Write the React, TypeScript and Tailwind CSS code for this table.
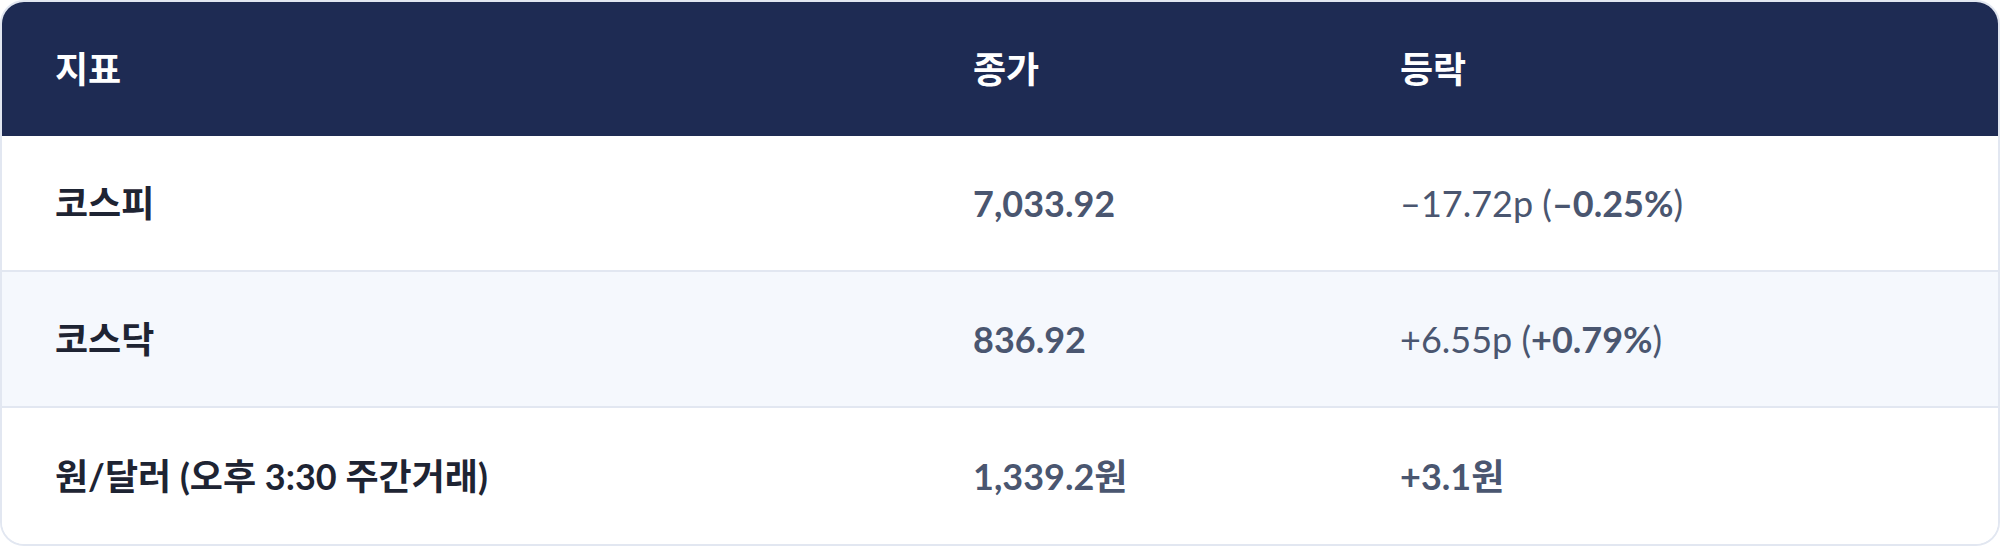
const rows = [
  {
    name: '코스피',
    close: '7,033.92',
    change: (
      <>
        –17.72p (<b className="font-bold">–0.25%</b>)
      </>
    ),
  },
  {
    name: '코스닥',
    close: '836.92',
    change: (
      <>
        +6.55p (<b className="font-bold">+0.79%</b>)
      </>
    ),
    striped: true,
  },
  {
    name: '원/달러 (오후 3:30 주간거래)',
    close: '1,339.2원',
    change: <b className="font-bold">+3.1원</b>,
  },
];

export default function App() {
  return (
    <div className="h-[546px] w-[2000px] bg-white font-['Lato','Noto_Sans_CJK_KR',sans-serif]">
      <div className="h-full overflow-hidden rounded-[24px] border-2 border-[#e2e7f1]">
        <div className="grid h-[134px] grid-cols-[918px_427px_1fr] items-center bg-[#1e2b53] text-[36px] font-bold text-white">
          <div className="pl-[53px]">지표</div>
          <div className="pl-[53px]">종가</div>
          <div className="pl-[53px]">등락</div>
        </div>
        {rows.map((r, i) => (
          <div
            key={r.name}
            className={`grid h-[136px] grid-cols-[918px_427px_1fr] items-center text-[36px] ${
              i < rows.length - 1 ? 'border-b-2 border-[#e2e7f1]' : ''
            } ${r.striped ? 'bg-[#f5f8fd]' : 'bg-white'}`}
          >
            <div className="pl-[53px] font-bold text-[#1e2433]">{r.name}</div>
            <div className="pl-[53px] font-bold text-[#4a5670]">{r.close}</div>
            <div className="pl-[53px] text-[#4a5670]">{r.change}</div>
          </div>
        ))}
      </div>
    </div>
  );
}
